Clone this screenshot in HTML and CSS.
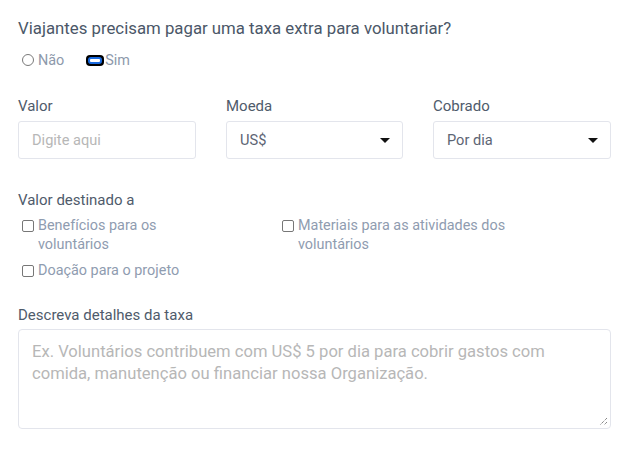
FILE: index.html
```html
<!DOCTYPE html>
<html lang="pt">
<head>
<meta charset="utf-8">
<link rel="stylesheet" href="styles.css">
</head>
<body>
<div class="form">
  <h1 class="question">Viajantes precisam pagar uma taxa extra para voluntariar?</h1>
  <div class="radios">
    <label class="radio"><span class="radio-dot"></span>Não</label>
    <label class="radio"><span class="radio-on"><span class="radio-on-in"></span></span>Sim</label>
  </div>

  <div class="fields">
    <div class="field">
      <div class="label">Valor</div>
      <div class="box placeholder">Digite aqui</div>
    </div>
    <div class="field">
      <div class="label">Moeda</div>
      <div class="box select"><span>US$</span><span class="caret"></span></div>
    </div>
    <div class="field">
      <div class="label">Cobrado</div>
      <div class="box select"><span>Por dia</span><span class="caret"></span></div>
    </div>
  </div>

  <div class="label dest">Valor destinado a</div>
  <div class="checks">
    <label class="check c1"><span class="cb"></span><span class="ct">Benefícios para os voluntários</span></label>
    <label class="check c2"><span class="cb"></span><span class="ct">Materiais para as atividades dos voluntários</span></label>
    <label class="check c3"><span class="cb"></span><span class="ct">Doação para o projeto</span></label>
  </div>

  <div class="label desc">Descreva detalhes da taxa</div>
  <div class="textarea">
    <span class="ta-ph">Ex. Voluntários contribuem com US$ 5 por dia para cobrir gastos com comida, manutenção ou financiar nossa Organização.</span>
    <svg class="grip" width="9" height="9" viewBox="0 0 9 9"><path d="M8 1 L1 8 M8 5 L5 8" stroke="#555" stroke-width="1" stroke-dasharray="1 1"/></svg>
  </div>
</div>
</body>
</html>
```

FILE: styles.css
```css
* { box-sizing: border-box; }
body {
  margin: 0;
  background: #fff;
  font-family: Roboto, "Open Sans", sans-serif;
  color: #4f5b6b;
}
.form {
  padding: 15px 13px 0 18px;
}
.question {
  margin: 0;
  font-size: 16.8px;
  font-weight: 400;
  line-height: 26px;
  color: #4b5768;
}
.radios {
  display: flex;
  gap: 22px;
  margin-top: 10px;
  padding-left: 4px;
  height: 18px;
  align-items: center;
}
.radio {
  display: flex;
  align-items: center;
  font-size: 14.4px;
  color: #8d99ab;
}
.radio-dot {
  width: 12px;
  height: 12px;
  border: 1px solid #7a7a7a;
  border-radius: 50%;
  margin-right: 4px;
}
.radio-on {
  width: 18px;
  height: 11px;
  background: #000;
  border-radius: 4px;
  padding: 2px;
  display: flex;
  margin-right: 1px;
}
.radio-on-in {
  flex: 1;
  background: #fff;
  border: 2px solid #1a6be0;
  border-radius: 3px;
}
.fields {
  display: grid;
  grid-template-columns: 178px 177px 178px;
  column-gap: 30px;
  margin-top: 27px;
}
.label {
  font-size: 15px;
  line-height: 20px;
  color: #4f5b6b;
}
.box {
  margin-top: 5px;
  height: 38px;
  border: 1px solid #e3e5ec;
  border-radius: 3px;
  display: flex;
  align-items: center;
  padding: 0 13px;
  font-size: 14.6px;
}
.placeholder { color: #b7b7b7; }
.select {
  justify-content: space-between;
  color: #5d6574;
  padding-right: 12px;
}
.caret {
  width: 0;
  height: 0;
  border-left: 5px solid transparent;
  border-right: 5px solid transparent;
  border-top: 5px solid #111;
}
.dest { margin-top: 31px; }
.checks {
  display: grid;
  grid-template-columns: 260px 240px;
  row-gap: 7px;
  margin-top: 6px;
}
.check {
  display: flex;
  align-items: flex-start;
  padding-left: 4px;
  font-size: 14.4px;
  line-height: 19px;
  color: #8f9cb0;
}
.cb {
  flex: none;
  width: 12px;
  height: 12px;
  border: 1px solid #777;
  border-radius: 2px;
  margin-top: 4px;
  margin-right: 4px;
}
.c1 .ct { max-width: 150px; }
.c2 .ct { max-width: 212px; }
.desc { margin-top: 25px; }
.textarea {
  position: relative;
  margin-top: 4px;
  width: 593px;
  height: 100px;
  border: 1px solid #e3e5ec;
  border-radius: 4px;
  padding: 11px 13px;
  font-size: 16.6px;
  line-height: 22px;
  color: #b7b7b7;
}
.ta-ph { display: block; max-width: 540px; }
.grip {
  position: absolute;
  right: 2px;
  bottom: 2px;
}
```
